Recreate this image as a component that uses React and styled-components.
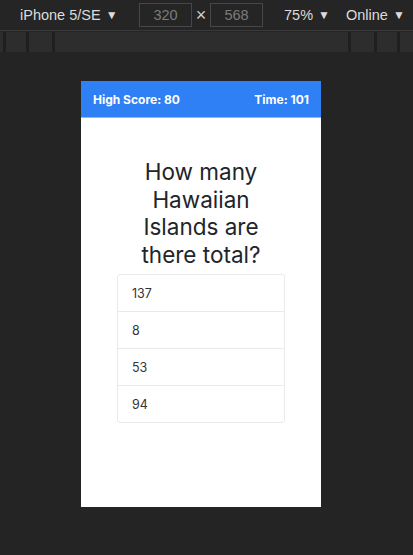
import React from 'react'
import styled, { createGlobalStyle } from 'styled-components'

const GlobalStyle = createGlobalStyle`
  html, body {
    margin: 0;
    padding: 0;
    background: #242424;
  }
  body {
    width: 413px;
    height: 555px;
    overflow: hidden;
    font-family: 'Inter', 'Liberation Sans', sans-serif;
  }
`

const answers = ['137', '8', '53', '94']

export default function App() {
  return (
    <>
      <GlobalStyle />
      <Toolbar>
        <Dropdown $w={119}>
          iPhone 5/SE <Caret>▼</Caret>
        </Dropdown>
        <SizeGroup>
          <SizeInput>320</SizeInput>
          <Times>×</Times>
          <SizeInput>568</SizeInput>
        </SizeGroup>
        <Dropdown $w={62}>
          75% <Caret>▼</Caret>
        </Dropdown>
        <Dropdown>
          Online <Caret>▼</Caret>
        </Dropdown>
      </Toolbar>
      <Ruler>
        <RulerCell $w={3} />
        <RulerCell $w={20} />
        <RulerCell $w={23} />
        <RulerCell $grow />
        <RulerCell $w={23} />
        <RulerCell $w={20} />
        <RulerCell $w={13} />
      </Ruler>
      <Stage>
        <Phone>
          <Header>
            <span>High Score: 80</span>
            <span>Time: 101</span>
          </Header>
          <Body>
            <Question>How many Hawaiian Islands are there total?</Question>
            <AnswerList>
              {answers.map((a) => (
                <Answer key={a}>{a}</Answer>
              ))}
            </AnswerList>
          </Body>
        </Phone>
      </Stage>
    </>
  )
}

const Toolbar = styled.div`
  height: 31px;
  display: flex;
  align-items: center;
  padding-left: 20px;
  box-sizing: border-box;
  border-bottom: 1px solid #3a3a3a;
  background: #252525;
  color: #dcdcdc;
  font-family: 'Liberation Sans', Arial, sans-serif;
  font-size: 14.5px;
`

const Dropdown = styled.div`
  display: flex;
  align-items: center;
  white-space: nowrap;
  ${(p) => p.$w && `width: ${p.$w}px;`}
`

const Caret = styled.span`
  font-size: 12px;
  margin-left: 5px;
`

const SizeGroup = styled.div`
  display: flex;
  align-items: center;
  margin-right: 21px;
`

const SizeInput = styled.div`
  width: 53px;
  height: 24px;
  box-sizing: border-box;
  border: 1px solid #474747;
  color: #7b7b7b;
  font-size: 14.5px;
  display: flex;
  align-items: center;
  justify-content: center;
`

const Times = styled.span`
  width: 18px;
  text-align: center;
  color: #cfcfcf;
  font-size: 18px;
`

const Ruler = styled.div`
  height: 20px;
  margin-top: 1px;
  display: flex;
  gap: 3px;
  background: #1f1f1f;
`

const RulerCell = styled.div`
  background: #2d2d2d;
  ${(p) => (p.$grow ? 'flex: 1;' : `width: ${p.$w}px;`)}
`

const Stage = styled.div`
  padding: 29px 0 0 81px;
`

const Phone = styled.div`
  width: 240px;
  height: 426px;
  background: #ffffff;
  display: flex;
  flex-direction: column;
`

const Header = styled.div`
  height: 36px;
  background: #2f7ff5;
  border-bottom: 1px solid #8fbaf7;
  display: flex;
  align-items: center;
  justify-content: space-between;
  padding: 0 12px;
  color: #ffffff;
  font-weight: 700;
  font-size: 12px;
`

const Body = styled.div`
  display: flex;
  flex-direction: column;
  align-items: center;
  padding-top: 40px;
`

const Question = styled.h1`
  width: 135px;
  margin: 0 0 6px;
  text-align: center;
  font-weight: 400;
  font-size: 22.5px;
  line-height: 27.5px;
  color: #212529;
`

const AnswerList = styled.div`
  width: 168px;
  display: flex;
  flex-direction: column;
`

const Answer = styled.div`
  height: 38px;
  box-sizing: border-box;
  border: 1px solid #eaeaea;
  margin-top: -1px;
  padding-left: 14px;
  display: flex;
  align-items: center;
  font-size: 12.5px;
  color: #333;

  &:first-child {
    margin-top: 0;
    border-radius: 3px 3px 0 0;
  }
  &:last-child {
    border-radius: 0 0 3px 3px;
  }
`
